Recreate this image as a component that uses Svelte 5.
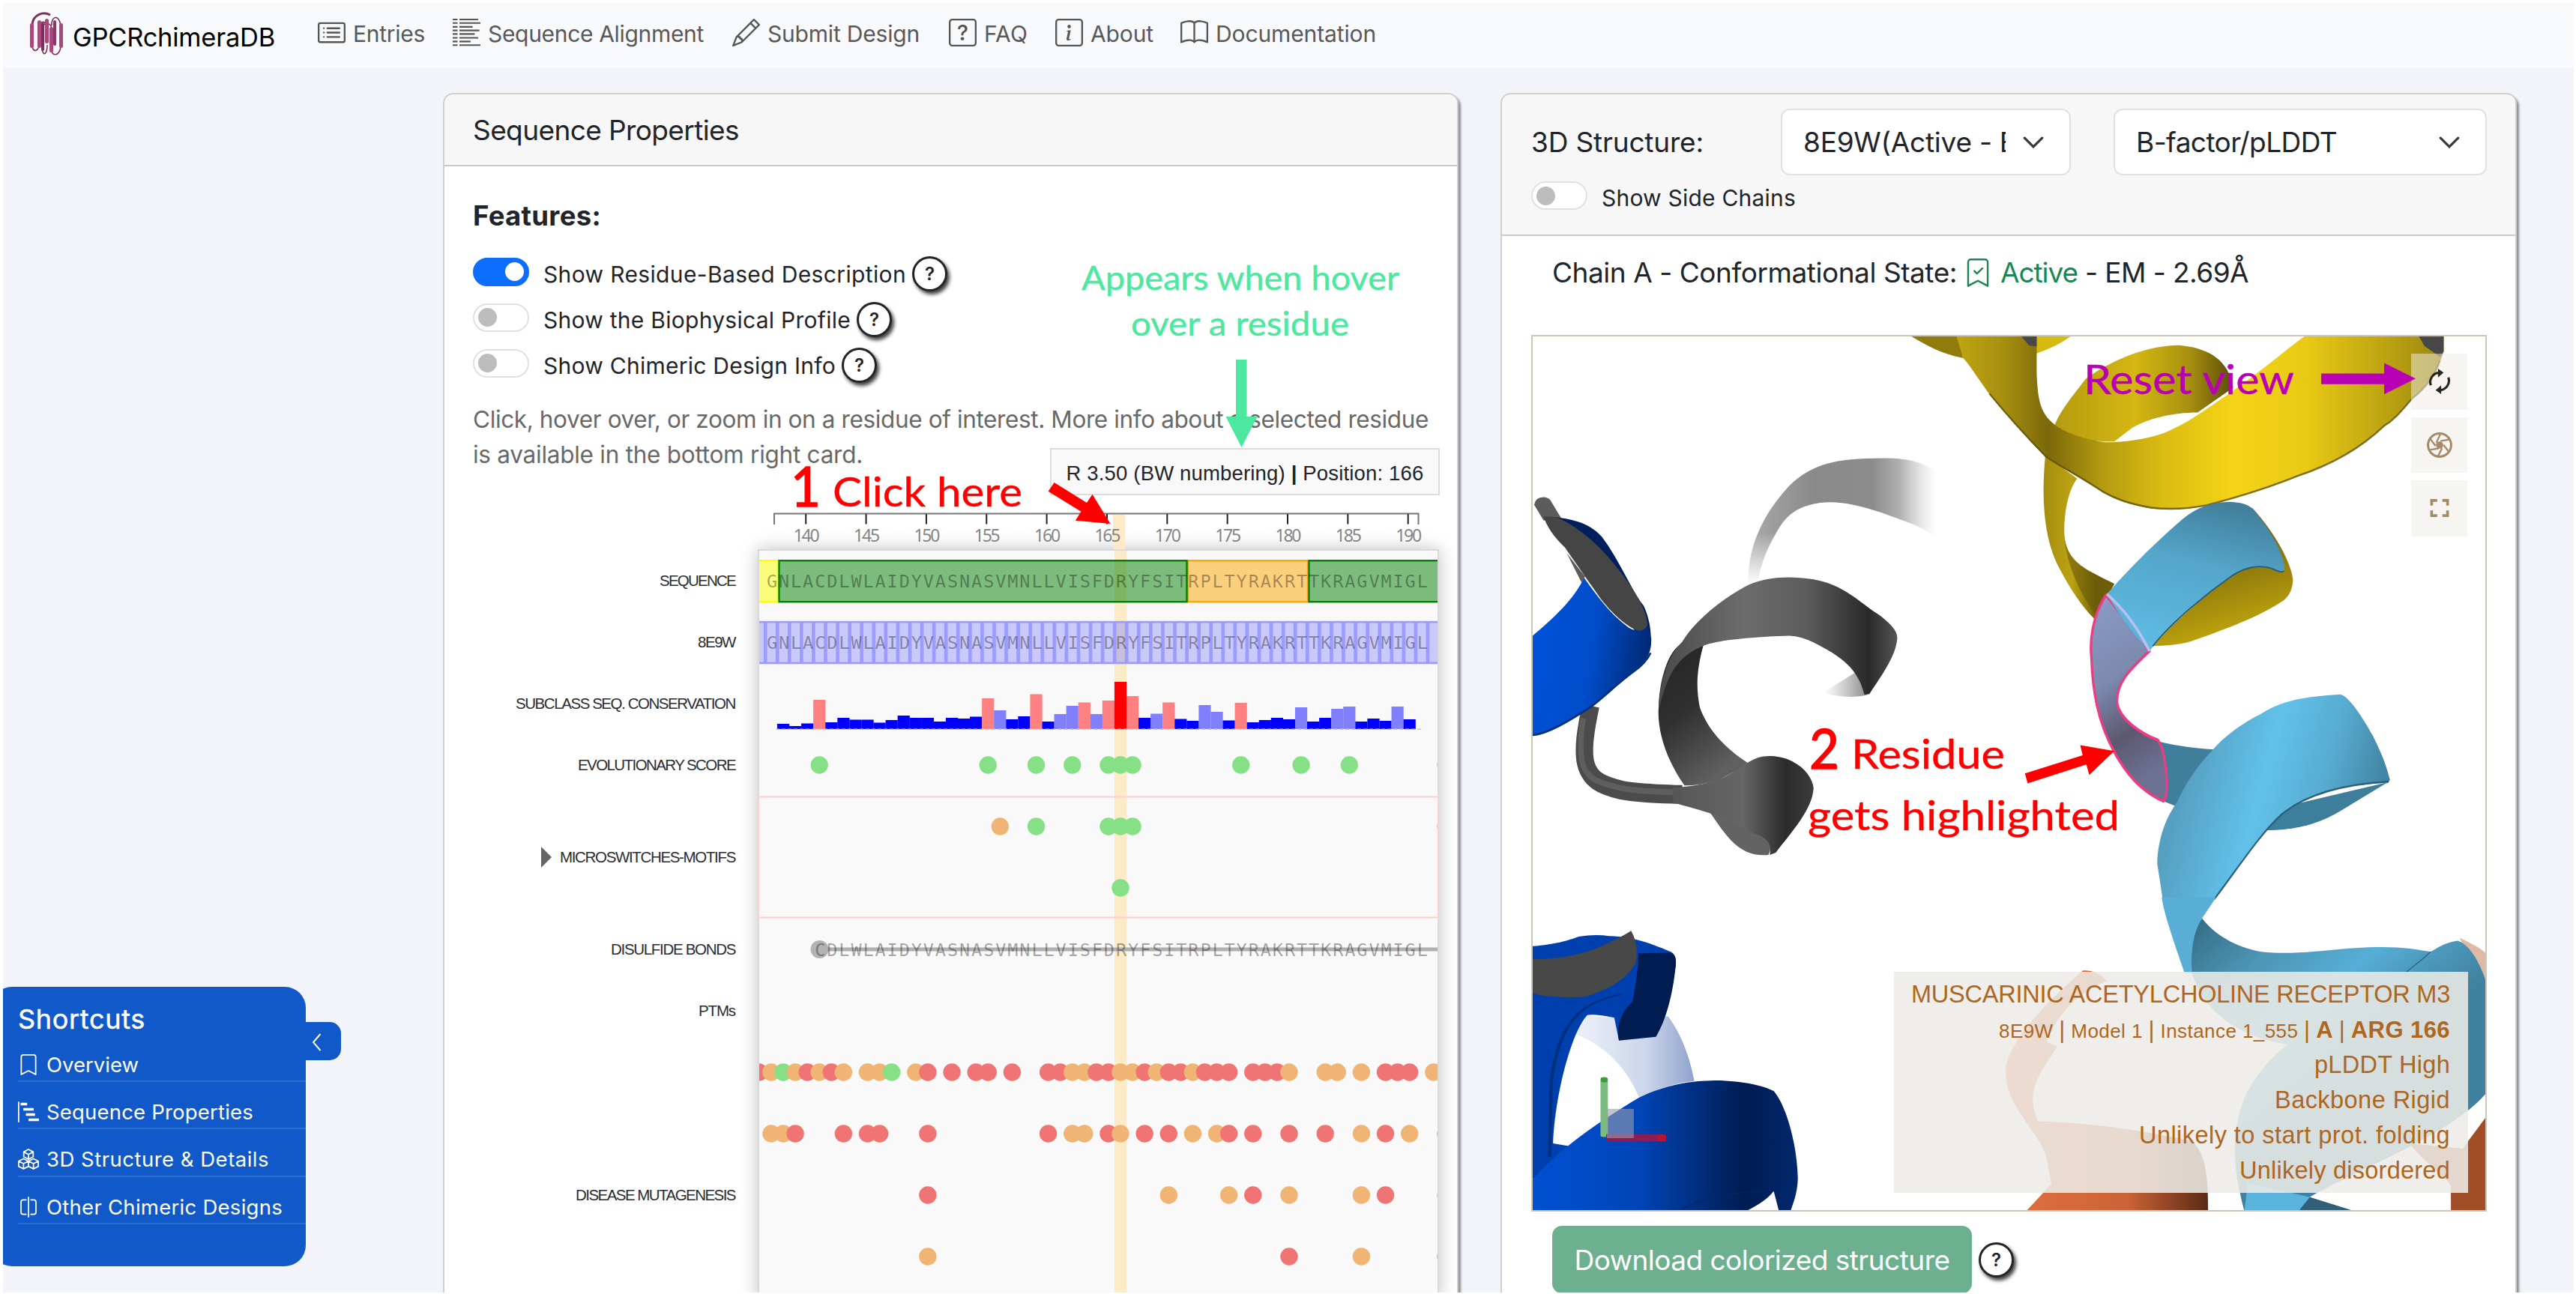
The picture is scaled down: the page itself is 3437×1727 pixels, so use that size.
<script>
  const sequence = 'GNLACDLWLAIDYVASNASVMNLLVISFDRYFSITRPLTYRAKRTTKRAGVMIGL';
  const first = 137;
  const pitch = 16.07;
  const trackX = (n) => 1495 + (n - 166) * pitch;
  const axisX = (n) => 1075.2 + (n - 140) * pitch;
  const ticks = [140, 145, 150, 155, 160, 165, 170, 175, 180, 185, 190];
  const letters = [...sequence].map((c, i) => ({ c, n: first + i }));
  const cells = Array.from({ length: 58 }, (_, i) => 136 + i);

  // conservation bar heights from residue 138; s = strong, m = medium, x = maximum
  const bars = '7 4 7.5 39s 9 15 12.5 12.5 8.5 12 18 15 15 10 15 14 16.5 41s 25m 13 17 46.5s 10 20m 31m 35.5s 20m 38s 63x 44s 15 20.5m 35.5s 13.5 11 32m 23m 11.5 35s 9 12 15 13 29m 10 15 27m 30m 10 14 11 30m 13'
    .split(' ')
    .map((v, i) => ({ n: 138 + i, h: parseFloat(v), kind: /[smx]$/.test(v) ? v.slice(-1) : 'l' }));

  const dotRows = [
    { y: 1021, d: '141g 155g 159g 162g 165g 166g 167g 176g 181g 185g 193g' },
    { y: 1103, d: '156o 159g 165g 166g 167g 193g' },
    { y: 1185, d: '166g' },
    { y: 1431, d: '136r 137o 138g 139o 140r 141o 142r 143o 145o 146o 147g 149o 150r 152r 154r 155r 157r 160r 161r 162o 163o 164r 165r 166o 167o 168r 169o 170r 171r 172o 173r 174r 175r 177r 178r 179r 180o 183o 184o 186o 188r 189r 190r 192o' },
    { y: 1513, d: '137o 138o 139r 143r 145r 146r 150r 160r 162o 163o 165r 166o 168r 170r 172o 174o 175r 177r 180r 183r 186o 188r 190o 193r' },
    { y: 1595, d: '150r 170o 175o 177r 180o 186o 188r 193o' },
    { y: 1677, d: '150o 180r 186o 193r' }
  ];
  const dots = dotRows.flatMap((r) => r.d.split(' ').map((t) => ({ y: r.y, n: parseInt(t), k: t.slice(-1) })));

  const trackLabels = [
    { t: 'SEQUENCE', w: 101, rows: 1 },
    { t: '8E9W', w: 50, rows: 1 },
    { t: 'SUBCLASS SEQ. CONSERVATION', w: 293, rows: 1 },
    { t: 'EVOLUTIONARY SCORE', w: 210, rows: 1 },
    { t: 'MICROSWITCHES-MOTIFS', w: 234, rows: 2, open: true },
    { t: 'DISULFIDE BONDS', w: 166, rows: 1 },
    { t: 'PTMs', w: 49, rows: 1 },
    { t: 'DISEASE MUTAGENESIS', w: 213, rows: 5 }
  ];

  const features = [
    { t: 'Show Residue-Based Description', w: 484, on: true },
    { t: 'Show the Biophysical Profile', w: 410, on: false },
    { t: 'Show Chimeric Design Info', w: 390, on: false }
  ];

  const square = 'M14 1a1 1 0 0 1 1 1v12a1 1 0 0 1-1 1H2a1 1 0 0 1-1-1V2a1 1 0 0 1 1-1zM2 0a2 2 0 0 0-2 2v12a2 2 0 0 0 2 2h12a2 2 0 0 0 2-2V2a2 2 0 0 0-2-2z';
  const bookmark = 'M2 2a2 2 0 0 1 2-2h8a2 2 0 0 1 2 2v13.5a.5.5 0 0 1-.777.416L8 13.101l-5.223 2.815A.5.5 0 0 1 2 15.5zm2-1a1 1 0 0 0-1 1v12.566l4.723-2.482a.5.5 0 0 1 .554 0L13 14.566V2a1 1 0 0 0-1-1z';
  const bookmarkTick = 'M10.854 5.146a.5.5 0 0 1 0 .708l-3 3a.5.5 0 0 1-.708 0l-1.5-1.5a.5.5 0 1 1 .708-.708L7.5 7.793l2.646-2.647a.5.5 0 0 1 .708 0';
  const nav = [
    { t: 'Entries', w: 96, icon: 'M14.5 3a.5.5 0 0 1 .5.5v9a.5.5 0 0 1-.5.5h-13a.5.5 0 0 1-.5-.5v-9a.5.5 0 0 1 .5-.5zm-13-1A1.5 1.5 0 0 0 0 3.5v9A1.5 1.5 0 0 0 1.5 14h13a1.5 1.5 0 0 0 1.5-1.5v-9A1.5 1.5 0 0 0 14.5 2zM5 8a.5.5 0 0 1 .5-.5h7a.5.5 0 0 1 0 1h-7A.5.5 0 0 1 5 8m0-2.5a.5.5 0 0 1 .5-.5h7a.5.5 0 0 1 0 1h-7a.5.5 0 0 1-.5-.5m0 5a.5.5 0 0 1 .5-.5h7a.5.5 0 0 1 0 1h-7a.5.5 0 0 1-.5-.5m-1-5a.5.5 0 1 1-1 0 .5.5 0 0 1 1 0M4 8a.5.5 0 1 1-1 0 .5.5 0 0 1 1 0m0 2.5a.5.5 0 1 1-1 0 .5.5 0 0 1 1 0' },
    { t: 'Sequence Alignment', w: 288, icon: 'M0 0h2.8v.9H0zM3.9 0h10.800v.9H3.900zM0 2.050h2.800v.9H0zM3.900 2.050h12.100v.9H3.900zM0 4.250h2.800v.9H0zM3.900 4.250h7.600v.9H3.900zM0 6.300h2.800v.9H0zM3.900 6.300h11.500v.9H3.900zM0 8.350h2.800v.9H0zM3.900 8.350h8.800v.9H3.900zM0 10.600h2.800v.9H0zM3.900 10.600h10.800v.9H3.900zM0 12.700h2.800v.9H0zM3.900 12.700h6.400v.9H3.900zM0 14.800h2.800v.9H0zM3.900 14.800h12.100v.9H3.900z' },
    { t: 'Submit Design', w: 203, icon: 'M12.146.146a.5.5 0 0 1 .708 0l3 3a.5.5 0 0 1 0 .708l-10 10a.5.5 0 0 1-.168.11l-5 2a.5.5 0 0 1-.65-.65l2-5a.5.5 0 0 1 .11-.168zM11.207 2.5 13.5 4.793 14.793 3.5 12.5 1.207zm1.586 3L10.5 3.207 4 9.707V10h.5a.5.5 0 0 1 .5.5v.5h.5a.5.5 0 0 1 .5.5v.5h.293zm-9.761 5.175-.106.106-1.528 3.821 3.821-1.528.106-.106A.5.5 0 0 1 5 12.5V12h-.5a.5.5 0 0 1-.5-.5V11h-.5a.5.5 0 0 1-.468-.325' },
    { t: 'FAQ', w: 58, icon: square + 'M5.255 5.786a.237.237 0 0 0 .241.247h.825c.138 0 .248-.113.266-.25.09-.656.54-1.134 1.342-1.134.686 0 1.314.343 1.314 1.168 0 .635-.374.927-.965 1.371-.673.489-1.206 1.06-1.168 1.987l.003.217a.25.25 0 0 0 .25.246h.811a.25.25 0 0 0 .25-.25v-.105c0-.718.273-.927 1.01-1.486.609-.463 1.244-.977 1.244-2.056 0-1.511-1.276-2.241-2.673-2.241-1.267 0-2.655.59-2.75 2.286m1.557 5.763c0 .533.425.927 1.01.927.609 0 1.028-.394 1.028-.927 0-.552-.42-.94-1.029-.94-.584 0-1.009.388-1.009.94' },
    { t: 'About', w: 84, icon: square + 'M8.93 6.588l-2.29.287-.082.38.45.083c.294.07.352.176.288.469l-.738 3.468c-.194.897.105 1.319.808 1.319.545 0 1.178-.252 1.465-.598l.088-.416c-.2.176-.492.246-.686.246-.275 0-.375-.193-.304-.533zM9 4.5a1 1 0 1 1-2 0 1 1 0 0 1 2 0' },
    { t: 'Documentation', w: 214, icon: 'M1 2.828c.885-.37 2.154-.769 3.388-.893 1.33-.134 2.458.063 3.112.752v9.746c-.935-.53-2.12-.603-3.213-.493-1.18.12-2.37.461-3.287.811zm7.500-.141c.654-.689 1.782-.886 3.112-.752 1.234.124 2.503.523 3.388.893v9.923c-.918-.35-2.107-.692-3.287-.81-1.094-.111-2.278-.039-3.213.492zM8 1.783C7.015.936 5.587.81 4.287.94c-1.514.153-3.042.672-3.994 1.105A.5.5 0 0 0 0 2.5v11a.5.5 0 0 0 .707.455c.882-.4 2.303-.881 3.68-1.02 1.409-.142 2.59.087 3.223.877a.5.5 0 0 0 .78 0c.633-.79 1.814-1.019 3.222-.877 1.378.139 2.8.62 3.681 1.02A.5.5 0 0 0 16 13.5v-11a.5.5 0 0 0-.293-.455c-.952-.433-2.48-.952-3.994-1.105C10.413.809 8.985.936 8 1.783' }
  ];

  // Tracks a single-line label so that it fills the given width in pixels.
  function track(node, width) {
    const natural = node.getBoundingClientRect().width;
    node.style.letterSpacing = (width - natural) / node.textContent.length + 'px';
  }
</script>

{#snippet help()}
  <span class="help">?</span>
{/snippet}

{#snippet caret()}
  <svg class="caret" viewBox="0 0 26 15"><path d="M2 2l11 11L24 2" /></svg>
{/snippet}

<div class="frame">
  <nav class="navbar">
    <a class="brand" href="#home">
      <svg class="logo" viewBox="0 0 44 58">
        <g fill="none" stroke="#7c2f58" stroke-width="1.600">
          <path d="M3 17C4 3 18-1 27 4" stroke-width="3" />
          <path d="M13 16C16 12 20 13 22 16M16 22C19 12 29 14 29 24M29 18C28 6 38 2 41 18" />
          <path d="M3 46C4 54 12 54 13 40M16 48C17 60 23 57 23 44M29 48C27 60 40 60 41 46" />
        </g>
        <g fill="#a6497c">
          <rect x="0" y="15" width="5" height="33" rx="2.500" /><rect x="10" y="11" width="5" height="37" rx="2.500" />
          <rect x="15" y="14" width="4" height="38" rx="2" fill="#7c2f58" /><rect x="20" y="9" width="5" height="33" rx="2.500" />
          <rect x="26" y="20" width="5" height="34" rx="2.500" /><rect x="31" y="11" width="4" height="34" rx="2" fill="#8b3765" />
          <rect x="39" y="15" width="5" height="33" rx="2.500" />
        </g>
      </svg>
      <span class="line" use:track={270}>GPCRchimeraDB</span>
    </a>
    <div class="links">
      {#each nav as item}
        <a class="link" href="#nav">
          <svg class="icon" viewBox="0 0 16 16"><path d={item.icon} /></svg>
          <span class="line" use:track={item.w}>{item.t}</span>
        </a>
      {/each}
    </div>
  </nav>

  <main>
    <section class="card props">
      <header><span class="line" use:track={355}>Sequence Properties</span></header>
      <div class="body">
        <h2><span class="line" use:track={171}>Features:</span></h2>
        {#each features as f}
          <div class="option">
            <span class="switch" class:on={f.on}><i></i></span>
            <span class="line" use:track={f.w}>{f.t}</span>
            {@render help()}
          </div>
        {/each}
        <p class="hint">
          <span class="line" use:track={1275}>Click, hover over, or zoom in on a residue of interest. More info about a selected residue</span>
          <span class="line" use:track={520}>is available in the bottom right card.</span>
        </p>
        <div class="viewer">
          <div class="names">
            {#each trackLabels as l}
              <div class="name" style:height="{l.rows * 82}px">
                {#if l.open}<svg class="expander" viewBox="0 0 14 28"><path d="M0 0L14 14L0 28z" /></svg>{/if}
                <span class="line" use:track={l.w}>{l.t}</span>
              </div>
            {/each}
          </div>
          <div class="plots">
            <svg class="axis" viewBox="1011 665 909 68">
              <rect x="1485" y="687" width="16" height="46" fill="#fdebc8" />
              <path d="M1033 700V685.5H1892.500V700" fill="none" stroke="#777" stroke-width="2" />
              {#each ticks as n}
                <line x1={axisX(n)} x2={axisX(n)} y1="686" y2="699.500" stroke="#222" stroke-width="2" />
                <text x={axisX(n) + 1} y="722.500" textLength="35">{n}</text>
              {/each}
            </svg>
            <div class="tracks">
              <svg viewBox="1011 733 909 1000">
                <rect x="1487" y="733" width="16.500" height="1000" fill="#fbebc6" />
                <rect x="1000" y="748.200" width="38" height="55" fill="#ffff00" fill-opacity=".5" stroke="#ffff00" stroke-width="2.400" />
                <rect x="1585" y="748.200" width="160" height="55" fill="#ffa500" fill-opacity=".5" stroke="#ffa500" stroke-width="2.400" />
                <rect x="1039.500" y="748.200" width="544" height="55" fill="#008000" fill-opacity=".5" stroke="#008000" stroke-width="2.400" />
                <rect x="1746.500" y="748.200" width="200" height="55" fill="#008000" fill-opacity=".5" stroke="#008000" stroke-width="2.400" />
                <rect x="1011" y="828.800" width="909" height="57.500" fill="#9c9cff" />
                {#each cells as n}
                  <rect x={trackX(n) - 5.500} y="831.500" width="11.400" height="52" fill={n === 166 ? '#c7bfdc' : '#c9c9fb'} />
                {/each}
                <g class="residues">
                  {#each letters as l}
                    <text x={trackX(l.n) + 1} y="784">{l.c}</text>
                    <text x={trackX(l.n) + 1} y="866">{l.c}</text>
                  {/each}
                </g>
                {#each bars as b}
                  <rect class="bar {b.kind}" x={trackX(b.n) - 8.100} y={973 - b.h} width="16.200" height={b.h} />
                {/each}
                <line x1="1035" x2="1896" y1="973.200" y2="973.200" stroke="#c8c8c8" stroke-width="1.600" stroke-dasharray="5 3" />
                <line x1="1093" x2="1920" y1="1267" y2="1267" stroke="#b0b0b0" stroke-width="5" />
                <circle cx="1093.500" cy="1267" r="12" fill="#b3b3b3" />
                <g class="residues bonds">
                  {#each letters.slice(4) as l}<text x={trackX(l.n) + 1} y="1275.500">{l.c}</text>{/each}
                </g>
                {#each dots as d}
                  <circle class="dot {d.k}" cx={trackX(d.n)} cy={d.y} r="11.700" />
                {/each}
                <path d="M1012 1740V734H1919V1740" fill="none" stroke="#dadada" stroke-width="2" />
                <rect x="1012" y="1063.500" width="907" height="161" fill="none" stroke="#fbd0cd" stroke-width="2" />
              </svg>
            </div>
          </div>
        </div>
        <div class="tip"><span class="line" use:track={477}>R 3.50 (BW numbering) <b>|</b> Position: 166</span></div>
      </div>
    </section>

    <section class="card structure">
      <header>
        <div class="controls">
          <span class="line title" use:track={230}>3D Structure:</span>
          <div class="select small"><span class="clip"><span class="line" use:track={317}>8E9W(Active - EM</span></span>{@render caret()}</div>
          <div class="select large"><span class="line" use:track={268}>B-factor/pLDDT</span>{@render caret()}</div>
        </div>
        <div class="side">
          <span class="switch"><i></i></span>
          <span class="line" use:track={259}>Show Side Chains</span>
        </div>
      </header>
      <div class="body">
        <div class="state">
          <span class="line" use:track={540}>Chain A - Conformational State:</span>
          <svg class="mark" viewBox="0 0 16 16"><path d={bookmark} /><path d={bookmarkTick} /></svg>
          <span class="line active" use:track={103}>Active</span>
          <span class="line" use:track={218}>- EM - 2.69Å</span>
        </div>
        <div class="canvas">
          <svg class="scene" viewBox="2045 449 1271 1166">
            <defs>
              <linearGradient id="fade"><stop offset="0" stop-color="#aaa" /><stop offset=".35" stop-color="#8a8a8a" /><stop offset=".66" stop-color="#8c8c8c" /><stop offset=".8" stop-color="#949494" stop-opacity=".75" /><stop offset=".93" stop-color="#a0a0a0" stop-opacity=".22" /><stop offset="1" stop-color="#aaa" stop-opacity="0" /></linearGradient>
              <linearGradient id="fadeDown" x2="0" y2="1"><stop offset="0" stop-color="#fff" stop-opacity="0" /><stop offset="1" stop-color="#fff" /></linearGradient>
              <linearGradient id="wisp"><stop offset="0" stop-color="#aaa" stop-opacity="0" /><stop offset="1" stop-color="#888" /></linearGradient>
              <linearGradient id="gray"><stop offset="0" stop-color="#4a4a4a" /><stop offset=".35" stop-color="#6c6c6c" /><stop offset=".62" stop-color="#5c5c5c" /><stop offset=".88" stop-color="#292929" /><stop offset="1" stop-color="#555" /></linearGradient>
              <linearGradient id="grayIn" x2=".5" y2="1"><stop offset="0" stop-color="#232323" /><stop offset=".5" stop-color="#303030" /><stop offset="1" stop-color="#606060" /></linearGradient>
              <linearGradient id="fan"><stop offset="0" stop-color="#565656" /><stop offset=".5" stop-color="#666" /><stop offset=".8" stop-color="#2b2b2b" /><stop offset="1" stop-color="#3c3c3c" /></linearGradient>
              <linearGradient id="blue" x1="0" y1=".4" x2="1" y2=".6"><stop offset="0" stop-color="#0052da" /><stop offset=".5" stop-color="#004cc8" /><stop offset="1" stop-color="#00266c" /></linearGradient>
              <linearGradient id="blueLow"><stop offset="0" stop-color="#0050d2" /><stop offset=".4" stop-color="#0045b8" /><stop offset=".8" stop-color="#001c50" /><stop offset="1" stop-color="#00286e" /></linearGradient>
              <linearGradient id="ghost"><stop offset="0" stop-color="#eef1f9" /><stop offset=".6" stop-color="#ccd6ea" /><stop offset="1" stop-color="#8ea2cc" /></linearGradient>
              <linearGradient id="gold" gradientUnits="userSpaceOnUse" x1="-220" y1="60" x2="1352" y2="60"><stop offset="0" stop-color="#c0a511" /><stop offset=".1" stop-color="#a58f10" /><stop offset=".19" stop-color="#7b680a" /><stop offset=".3" stop-color="#b49a10" /><stop offset=".42" stop-color="#d9bb13" /><stop offset=".57" stop-color="#f4d416" /><stop offset=".72" stop-color="#e8c915" /><stop offset="1" stop-color="#9c870f" /></linearGradient>
              <linearGradient id="goldBack"><stop offset="0" stop-color="#b59b10" /><stop offset=".45" stop-color="#d4b712" /><stop offset=".75" stop-color="#a8910f" /><stop offset="1" stop-color="#5c4d07" /></linearGradient>
              <linearGradient id="goldLow" x2=".3" y2="1"><stop offset="0" stop-color="#7a690b" /><stop offset=".4" stop-color="#7b690b" /><stop offset="1" stop-color="#bfa30e" /></linearGradient>
              <linearGradient id="goldSide"><stop offset="0" stop-color="#a38d0f" /><stop offset=".4" stop-color="#bca212" /><stop offset=".75" stop-color="#756309" /><stop offset="1" stop-color="#7d6a0a" /></linearGradient>
              <linearGradient id="cyan" x1=".6" y1="0" x2=".3" y2="1"><stop offset="0" stop-color="#427f9d" /><stop offset=".4" stop-color="#54a6ca" /><stop offset="1" stop-color="#5fbbe4" /></linearGradient>
              <linearGradient id="cyanBig" x1=".15" y1=".2" x2="1" y2=".4"><stop offset="0" stop-color="#559fc0" /><stop offset=".4" stop-color="#62c1ea" /><stop offset=".7" stop-color="#57abd0" /><stop offset="1" stop-color="#3f819f" /></linearGradient>
              <linearGradient id="cyanLow" gradientUnits="userSpaceOnUse" x1="996" y1="150" x2="1434" y2="350"><stop offset="0" stop-color="#356d86" /><stop offset=".3" stop-color="#4c94b4" /><stop offset=".6" stop-color="#57aed6" /><stop offset="1" stop-color="#3f819f" /></linearGradient>
              <linearGradient id="pick" x2=".25" y2="1"><stop offset="0" stop-color="#8c9cc8" /><stop offset=".45" stop-color="#7c8aae" /><stop offset=".75" stop-color="#5d5870" /><stop offset="1" stop-color="#6c7192" /></linearGradient>
              <linearGradient id="rust"><stop offset="0" stop-color="#e07040" /><stop offset=".6" stop-color="#cc6336" /><stop offset="1" stop-color="#5a2a15" /></linearGradient>
            </defs>

            <!-- left half: grey coil and blue strand -->
            <g transform="translate(2030 440) scale(.44643 .4847)">
              <path fill="url(#fade)" d="M678 700C675 600 720 510 800 430C880 360 960 354 1100 354C1180 356 1210 375 1240 390V575C1200 540 1150 530 1080 505C1000 480 940 470 890 477C800 490 780 530 755 570C730 610 715 650 705 700Z" />
              <rect x="660" y="560" width="110" height="142" fill="url(#fadeDown)" />
              <path fill="#5c5c5c" d="M38 482Q42 460 68 461Q85 462 92 478L122 524L66 525ZM135 615L190 680L180 697Z" />
              <path fill="none" stroke="#4b4b4b" stroke-width="52" d="M207 1035C190 1110 185 1150 190 1185C200 1240 240 1255 300 1268C360 1278 420 1278 480 1280" />
              <path fill="none" stroke="#5e5e5e" stroke-width="16" d="M185 1070C175 1120 177 1150 180 1185C190 1240 240 1250 300 1263C360 1273 420 1273 480 1274" />
              <path fill="#001f5c" d="M90 515C150 522 200 530 240 570C290 630 330 720 365 760C385 800 390 840 385 880L340 830Z" />
              <path fill="#454545" d="M66 515Q90 512 115 520C180 550 240 600 290 660C340 720 380 780 376 815Q372 835 345 828C300 810 250 760 225 725C190 680 160 640 130 600C95 570 75 540 66 515Z" />
              <path fill="url(#blue)" d="M33 843C90 800 160 740 187 683C220 725 260 780 320 820Q360 840 376 815L388 850C388 900 370 910 340 940C280 980 240 1020 200 1045C140 1080 80 1115 33 1119Z" />
              <path fill="none" stroke="#00307e" stroke-width="6" d="M386 890C375 910 360 925 340 938C280 978 240 1018 200 1043C140 1078 80 1112 33 1116" />
              <path fill="url(#wisp)" d="M900 1000Q980 1018 1034 1006L1005 940Z" />
              <path fill="url(#grayIn)" d="M545 865C525 930 520 980 533 1040C560 1110 620 1160 680 1195L590 1240C560 1250 520 1255 487 1255C430 1180 405 1100 410 1040C412 960 440 890 470 870Z" />
              <path fill="url(#gray)" d="M411 1045C412 960 445 890 480 860C520 800 600 740 680 702C740 680 800 678 870 687C960 700 1010 750 1060 780C1100 805 1125 830 1123 850C1120 900 1070 960 1040 1003L1025 1005C1010 950 980 920 930 890C890 870 850 845 800 843C700 845 600 855 560 865C480 890 440 930 411 1045Z" />
              <path fill="#636363" d="M560 1325C600 1335 680 1375 735 1405Q752 1425 738 1446C700 1450 660 1440 625 1405C600 1380 580 1350 560 1325Z" />
              <path fill="url(#fan)" d="M452 1262C520 1255 580 1250 630 1220C680 1190 700 1172 750 1174C830 1180 870 1230 873 1262C870 1320 810 1380 760 1440L742 1446C750 1410 730 1400 690 1385C600 1335 520 1320 452 1302Z" />
            </g>

            <!-- upper right: gold helix, cyan turn and selected residue -->
            <g transform="translate(2700 440) scale(.41454 .4847)">
              <path fill="#8f7c0d" d="M-362 18C-310 45 -260 68 -195 78L-210 18Z" />
              <path fill="#d6b911" d="M40 18H152Q110 45 40 66Z" />
              <path fill="url(#goldBack)" d="M100 262C120 220 160 180 200 135C290 80 400 44 500 43C590 50 660 80 674 160L560 228C480 228 400 245 350 270L292 308C200 310 140 290 100 262Z" />
              <path fill="url(#goldSide)" d="M70 345C58 450 62 560 105 640C140 700 180 755 228 797L292 700C200 660 135 640 131 560C130 500 145 440 172 410Z" />
              <path fill="#65560a" d="M131 560C133 620 160 700 235 790L292 700C200 660 135 640 131 560Z" opacity=".55" />
              <path fill="url(#gold)" d="M-216 18H42V120C45 180 50 220 85 250C120 280 170 295 260 310C330 310 400 300 450 285C520 260 560 235 620 200C760 120 850 50 905 18H1352V60C1335 110 1300 155 1250 190C1210 230 1190 250 1160 265C1080 330 980 375 880 405C780 440 680 465 590 485C520 497 460 497 410 492C330 480 290 465 255 448C180 405 110 375 70 350C-20 270 -60 230 -110 178C-150 130 -180 90 -195 78Z" />
              <path fill="none" stroke="#5f5108" stroke-opacity=".8" stroke-width="5" d="M1340 85C1325 125 1295 160 1250 190C1210 230 1190 250 1160 265C1080 330 980 375 880 403C780 438 680 463 590 483C520 495 460 495 410 490C330 478 290 463 255 446C180 403 110 373 70 348C-20 268 -60 228 -110 176" />
              <path fill="#484848" d="M1272 18H1352V60L1340 75L1290 45ZM-8 18H42V46L18 44Z" />
              <path fill="url(#goldLow)" d="M735 490C790 540 860 630 867 690Q865 725 838 745C760 790 650 825 540 858C500 868 450 872 405 870L600 720Z" />
              <path fill="url(#cyan)" d="M268 728C360 640 420 590 500 530C560 485 610 475 665 474C700 476 725 480 745 500C800 560 840 620 840 662Q830 672 800 658C760 645 710 655 670 678C600 720 480 800 405 885C360 830 320 770 268 728Z" />
              <path fill="none" stroke="#2c5c73" stroke-width="4" d="M838 664C830 672 810 662 800 658C760 645 710 655 670 678C600 720 480 800 415 872" />
              <path fill="#3f7f9c" d="M436 1134C500 1148 560 1152 615 1156L490 1312L450 1298Z" />
              <path fill="url(#pick)" stroke="#ec3d84" stroke-width="8" stroke-linejoin="round" d="M265 730C220 790 213 860 218 900C222 1000 240 1080 290 1160C340 1240 400 1280 450 1298Q462 1290 461 1240C455 1180 450 1150 432 1130C370 1110 310 1070 301 1030C295 970 350 930 405 885Z" />
              <path fill="#5ab4dc" d="M268 728Q350 790 405 885Q330 820 268 728Z" />
              <path fill="none" stroke="#b9c0ee" stroke-width="8" d="M268 728Q350 790 405 885" />
              <path fill="#3d7e9c" d="M765 1378C880 1380 950 1360 1020 1325L1172 1246L830 1315Z" />
              <path fill="url(#cyanBig)" d="M610 1156C640 1125 700 1085 760 1060C840 1015 920 1010 1020 1004C1050 1010 1100 1080 1125 1120C1160 1180 1170 1210 1179 1240L1172 1248C1060 1250 920 1270 830 1335C760 1390 700 1470 612 1570H448L430 1470C432 1400 460 1340 495 1300C520 1250 560 1200 610 1156Z" />
              <path fill="none" stroke="#2c6079" stroke-width="5" d="M1175 1244C1060 1250 920 1270 830 1335C760 1390 700 1470 614 1568" />
            </g>

            <!-- lower band: blue strand, rust loop, cyan tail -->
            <g transform="translate(2030 1180) scale(.8973 .3495)">
              <path fill="#c98a6c" opacity=".6" d="M1395 205Q1425 240 1434 265V370L1405 260Z" />
              <path fill="url(#rust)" d="M835 330C790 430 720 600 720 720C720 860 780 960 783 1080L788 1145L750 1250H1021C1021 1150 1020 1020 995 980C900 930 850 915 768 905C750 800 765 740 797 620L780 600C800 500 820 420 870 370Q855 325 835 330Z" />
              <path fill="#a04d28" d="M1434 890L1408 980L1400 1010L1320 990C1350 1080 1375 1120 1382 1150V1250H1434Z" />
              <path fill="url(#cyanLow)" d="M1012 130C1030 190 1060 240 1100 258C1160 275 1210 240 1280 240C1310 240 1335 250 1352 258Q1375 220 1392 216C1410 230 1425 300 1434 370V800C1380 960 1250 1080 1172 1195L1240 1250H1075C1060 1100 1050 950 1080 790C1100 700 1120 650 1140 612C1050 580 1010 450 996 334C994 250 1000 170 1012 130Z" />
              <path fill="#58aed4" d="M952 50L1033 50C1020 100 1015 120 1012 130C1000 170 995 250 996 340H986C970 220 955 110 952 50Z" />
              <path fill="none" stroke="#2c6079" stroke-width="2" d="M1352 258C1335 300 1322 320 1312 345" />
              <path fill="#2f6078" d="M1172 1195L1240 1250H1155Z" />
              <path fill="#5ab4dc" d="M1080 1140L1172 1195L1155 1250H1075Z" />

              <path fill="url(#ghost)" d="M80 500L138 510L218 505C240 580 252 680 257 752C220 760 190 800 175 815C160 720 130 620 78 570Z" />
              <path fill="#003fae" d="M16 237C50 230 70 215 85 200Q110 190 130 198C170 200 200 235 222 258Q232 270 229 320L170 560L145 597L138 510Q110 495 98 500C75 560 50 800 47 990L70 1000L16 1130Z" />
              <path fill="#001c50" d="M174 265L222 262Q232 270 229 320C225 420 215 520 200 583L145 597C140 540 150 480 165 450Q174 330 174 265Z" />
              <path fill="none" stroke="#00307e" stroke-width="5" d="M150 420C90 450 55 520 44 760L42 1040" />
              <path fill="#484848" d="M16 287C60 285 90 270 120 235Q150 200 163 178Q175 230 170 300C155 370 130 400 95 430C60 435 30 430 16 415Z" />
              <path fill="url(#blueLow)" d="M16 1130C60 1000 120 900 175 815C220 760 260 748 300 750C340 755 365 775 375 790C395 850 410 1000 411 1125C410 1190 402 1230 400 1250H16Z" />
              <path fill="#fff" d="M333 1250Q365 1210 375 1172L383 1250Z" />
              <path fill="none" stroke="#00266c" stroke-width="3" d="M232 1250C270 1195 310 1175 375 1172" />
              <g stroke-linecap="round" fill="none">
                <path stroke="#7dbb80" stroke-width="11" d="M123 745V960" /><path stroke="#3d9a41" stroke-width="10" d="M123 742V752" />
              </g>
              <rect x="126" y="955" width="80" height="28" fill="#8c1c56" /><rect x="203" y="955" width="12" height="28" rx="5" fill="#b81438" />
              <rect x="127" y="858" width="40" height="112" fill="#9a9cae" opacity=".6" />
            </g>
          </svg>
          <div class="tools">
            <span class="tool"><svg viewBox="0 0 32 32"><g fill="none" stroke="#2c261e" stroke-width="3"><path d="M5 21A12 12 0 0 1 15 5M27 11A12 12 0 0 1 17 27" /></g><path fill="#2c261e" d="M14 0L21 5L14 11ZM18 21L11 27L18 32Z" /></svg></span>
            <span class="tool"><svg viewBox="0 0 32 32"><circle cx="16" cy="16" r="14.500" fill="none" stroke="#a48a66" stroke-width="2.800" /><circle cx="16" cy="16" r="4.500" fill="#a48a66" /><path fill="none" stroke="#a48a66" stroke-width="2.200" d="M12 13L17 2M17 11L28 9M21 16L28 25M19 20L14 30M15 20L4 22M11 17L4 8" /></svg></span>
            <span class="tool"><svg viewBox="0 0 32 32"><path fill="none" stroke="#a48a66" stroke-width="3.400" d="M6 13V6.500H13M19.500 6.500H26V13M26 19V25.500H19.500M13 25.500H6V19" /></svg></span>
          </div>
          <div class="info">
            <div><span class="line" use:track={719}>MUSCARINIC ACETYLCHOLINE RECEPTOR M3</span></div>
            <div class="path"><span class="line" use:track={602}>8E9W <i>|</i> Model 1 <i>|</i> Instance 1_555 <i>|</i> <b>A</b> <i>|</i> <b>ARG 166</b></span></div>
            <div><span class="line" use:track={181}>pLDDT High</span></div>
            <div><span class="line" use:track={234}>Backbone Rigid</span></div>
            <div><span class="line" use:track={415}>Unlikely to start prot. folding</span></div>
            <div><span class="line" use:track={281}>Unlikely disordered</span></div>
          </div>
        </div>
        <div class="actions">
          <button><span class="line" use:track={501}>Download colorized structure</span></button>
          {@render help()}
        </div>
      </div>
    </section>
  </main>

  <aside class="shortcuts">
    <h3><span class="line" use:track={170}>Shortcuts</span></h3>
    <a href="#overview"><svg viewBox="0 0 16 16"><path d={bookmark} /></svg><span class="line" use:track={123}>Overview</span></a>
    <a href="#sequence"><svg viewBox="0 0 16 16"><path d="M.5 0a.5.5 0 0 1 .5.5v15a.5.5 0 0 1-1 0V.5A.5.5 0 0 1 .5 0M2 1.500a.5.5 0 0 1 .5-.5h4a.5.5 0 0 1 .5.5v1a.5.5 0 0 1-.5.5h-4a.5.5 0 0 1-.5-.5zm2 4a.5.5 0 0 1 .5-.5h7a.5.5 0 0 1 .5.5v1a.5.5 0 0 1-.5.5h-7a.5.5 0 0 1-.5-.5zm2 4a.5.5 0 0 1 .5-.5h6a.5.5 0 0 1 .5.5v1a.5.5 0 0 1-.5.5h-6a.5.5 0 0 1-.5-.5zm2 4a.5.5 0 0 1 .5-.5h7a.5.5 0 0 1 .5.5v1a.5.5 0 0 1-.5.5h-7a.5.5 0 0 1-.5-.5z" /></svg><span class="line" use:track={276}>Sequence Properties</span></a>
    <a href="#structure"><svg viewBox="0 0 16 16"><path class="stroke" d="M8 .6L11.600 2.500V6.200L8 8.200L4.400 6.200V2.500ZM4.400 2.500L8 4.400L11.600 2.500M8 4.400V8M4.200 7.700L8 9.600V13.500L4.200 15.400L.5 13.500V9.600ZM.5 9.600L4.200 11.500L8 9.600M4.200 11.500V15.300M11.800 7.700L15.500 9.600V13.500L11.800 15.400L8 13.500V9.600ZM8 9.600L11.800 11.500L15.500 9.600M11.800 11.500V15.300" /></svg><span class="line" use:track={297}>3D Structure &amp; Details</span></a>
    <a href="#designs"><svg viewBox="0 0 16 16"><path class="stroke" d="M8 .2V15.800M6.500 2.500H4A1.700 1.700 0 0 0 2.300 4.200V11.800A1.700 1.700 0 0 0 4 13.500H6.500M9.500 2.500H12A1.700 1.700 0 0 1 13.700 4.200V11.800A1.700 1.700 0 0 1 12 13.500H9.500" /></svg><span class="line" use:track={315}>Other Chimeric Designs</span></a>
    <span class="tab"><svg viewBox="0 0 12 24"><path d="M11 1L1.500 12L11 23" /></svg></span>
  </aside>

  <svg class="notes" viewBox="4 4 3430 1721">
    <g fill="#4de8a0" stroke="#4de8a0">
      <text x="1443" y="387" font-size="45" textLength="424" lengthAdjust="spacingAndGlyphs">Appears when hover</text>
      <text x="1509" y="448" font-size="45" textLength="291" lengthAdjust="spacingAndGlyphs">over a residue</text>
      <path stroke="none" d="M1649 480H1663.500V556H1677.500L1656.500 597L1635.500 556H1649Z" />
    </g>
    <g fill="#ff0000" stroke="#ff0000">
      <text class="num" x="1055" y="676" font-size="74" textLength="40" lengthAdjust="spacingAndGlyphs">1</text>
      <text x="1111" y="676" font-size="55" textLength="253" lengthAdjust="spacingAndGlyphs">Click here</text>
      <path stroke="none" d="M1406.600 644L1398.600 655.700L1442.400 682.700L1434.800 694.700L1481.500 699L1457.500 659.700L1450 671Z" />
      <text class="num" x="2414" y="1025.500" font-size="74" textLength="40" lengthAdjust="spacingAndGlyphs">2</text>
      <text x="2470" y="1025.500" font-size="55" textLength="205" lengthAdjust="spacingAndGlyphs">Residue</text>
      <text x="2412" y="1107.500" font-size="55" textLength="416" lengthAdjust="spacingAndGlyphs">gets highlighted</text>
      <path stroke="none" d="M2701.700 1032.300L2705.400 1045.400L2783.700 1020.200L2787.500 1034.300L2821 1002.300L2775.500 994.500L2778.800 1008Z" />
    </g>
    <g fill="#b800b4" stroke="#b800b4">
      <text x="2780" y="526" font-size="55" textLength="281" lengthAdjust="spacingAndGlyphs">Reset view</text>
      <path stroke="none" d="M3097 498.600H3181V484.600L3223 505.300L3181 526.300V512.700H3097Z" />
    </g>
  </svg>
</div>

<style>
  :global(body) { background: #fff; }
  .frame {
    position: relative; box-sizing: border-box; width: 3430px; height: 1721px; margin: 4px 3px 0 4px; overflow: hidden;
    background: #f3f4fa; color: #212529; font-family: Inter, "Liberation Sans", sans-serif; font-size: 30px;
  }
  .line { display: inline-block; white-space: pre; flex: none; }
  a { color: inherit; text-decoration: none; }

  .navbar { display: flex; height: 87px; background: #f8f9fb; align-items: center; box-sizing: border-box; padding-left: 36px; }
  .brand { display: flex; align-items: center; width: 384px; color: #000; font-size: 34.500px; }
  .brand .line { padding-top: 4px; margin-left: 13px; }
  .logo { width: 44px; height: 58px; margin-top: -6px; }
  .links { display: grid; grid-template-columns: 180px 373px 289px 142px 167px 270px; color: #58595b; padding-bottom: 6px; }
  .link { display: flex; align-items: center; gap: 10px; }
  .icon { width: 37px; height: 37px; fill: #555; margin-top: -3px; }

  main { display: flex; gap: 56px; padding: 33px 0 0 587px; }
  .card { box-sizing: border-box; height: 1700px; background: #fff; border: 2px solid #cfcfcf; border-radius: 14px 14px 0 0; box-shadow: 3px 4px 3px rgba(0, 0, 0, .42); flex: none; }
  .card header { background: #f7f7f7; border-bottom: 2px solid #c9c9c9; border-radius: 12px 12px 0 0; box-sizing: border-box; }
  .props { width: 1355px; }
  .props header { height: 96px; padding: 0 0 0 38px; display: flex; align-items: center; font-size: 37px; }
  .props .body { position: relative; padding: 41px 0 0 38px; }
  h2 { margin: 0 0 22px; height: 50px; line-height: 50px; font-size: 36.500px; font-weight: 700; }
  .option { display: flex; align-items: center; height: 61px; }
  .switch { display: flex; align-items: center; box-sizing: border-box; width: 75px; height: 38px; margin: 0 19px 6px 0; padding: 0 5px; border: 2px solid #dee2e6; border-radius: 19px; background: #fff; flex: none; }
  .switch i { width: 25px; height: 25px; border-radius: 50%; background: #bdbdbd; }
  .switch.on { background: #0d6efd; border-color: #0d6efd; justify-content: flex-end; }
  .switch.on i { background: #fff; }
  .help { display: flex; align-items: center; justify-content: center; box-sizing: border-box; width: 47px; height: 47px; margin-left: 8px; border: 3px solid #212529; border-radius: 50%; background: #fff; color: #212529; font-size: 24px; font-weight: 600; box-shadow: 3px 4px 5px rgba(0, 0, 0, .75); flex: none; }
  .hint { margin: 18px 0 0; height: 94px; line-height: 47px; font-size: 31.500px; color: #696969; }
  .hint .line { display: block; width: max-content; }
  .viewer { display: flex; justify-content: space-between; width: 1289px; height: 1100px; margin-top: 35px; }
  .names { width: 350px; padding-top: 69px; }
  .name { display: flex; align-items: center; justify-content: flex-end; font-family: "Liberation Sans", sans-serif; font-size: 20.500px; color: #2a2d31; }
  .expander { width: 14px; height: 28px; margin-right: 11px; fill: #666; }
  .plots { width: 909px; }
  .axis { display: block; width: 909px; height: 68px; overflow: visible; }
  .axis text { font: 23px "Noto Sans", sans-serif; fill: #858585; text-anchor: middle; }
  .tracks { height: 1000px; background: #f9f9f9; box-shadow: 0 0 22px rgba(0, 0, 0, .25); }
  .tracks svg { display: block; width: 909px; height: 1000px; }
  .residues text { font: 23.500px "DejaVu Sans Mono", monospace; fill: #000; fill-opacity: .34; text-anchor: middle; }
  .bar.l { fill: #0000ff; }
  .bar.m { fill: #8080ff; }
  .bar.s { fill: #ff8080; }
  .bar.x { fill: #ff0000; }
  .dot.g { fill: #86e086; }
  .dot.o { fill: #f0b474; }
  .dot.r { fill: #f07474; }
  .tip { position: absolute; top: 376px; left: 808px; box-sizing: border-box; width: 520px; height: 63px; padding-top: 4px; display: flex; align-items: center; justify-content: center; background: #f9f9f9; border: 2px solid #dcdcdc; font-family: "Liberation Sans", sans-serif; font-size: 27.500px; }

  .structure { width: 1356px; }
  .structure header { height: 189px; padding: 19px 0 0 39px; }
  .controls { display: flex; align-items: center; height: 89px; font-size: 37px; }
  .title { margin-right: 103px; }
  .select { display: flex; align-items: center; justify-content: space-between; box-sizing: border-box; height: 89px; padding: 0 34px 0 28px; background: #fff; border: 2px solid #dee2e6; border-radius: 12px; }
  .select.small { width: 387px; margin-right: 57px; }
  .select.large { width: 498px; }
  .clip { width: 270px; overflow: hidden; flex: none; }
  .caret { width: 28px; height: 16px; fill: none; stroke: #343a40; stroke-width: 3; stroke-linecap: round; }
  .side { display: flex; align-items: center; height: 61px; margin-top: -1px; }
  .side .switch { margin-bottom: 5px; }
  .structure .body { padding: 20px 0 0 39px; }
  .state { display: flex; align-items: center; height: 56px; padding-left: 28px; font-size: 37px; }
  .mark { width: 38px; height: 38px; margin: 2px 11px 0 9px; fill: #198754; flex: none; }
  .active { color: #198754; margin-right: 10px; }
  .canvas { position: relative; box-sizing: border-box; width: 1275px; height: 1170px; margin-top: 56px; border: 2px solid #cdc6b8; }
  .scene { display: block; width: 1271px; height: 1166px; }
  .tools { position: absolute; top: 23px; right: 24px; display: flex; flex-direction: column; gap: 10px; }
  .tool { display: flex; align-items: center; justify-content: center; width: 75px; height: 74.500px; background: rgba(238, 236, 231, .52); }
  .tool svg { width: 34px; height: 34px; }
  .info { position: absolute; right: 23px; bottom: 23px; box-sizing: border-box; width: 766px; height: 295px; padding: 7px 24px 0 0; background: rgba(237, 236, 231, .87); color: #ae6620; font-family: "Liberation Sans", sans-serif; font-size: 32.500px; text-align: right; }
  .info div { display: flex; align-items: center; justify-content: flex-end; height: 47px; }
  .info .path { font-size: 26px; }
  .info .path i, .info .path b { font-size: 31px; font-style: normal; }
  .actions { display: flex; align-items: center; height: 90px; margin: 19px 0 0 28px; }
  button { box-sizing: border-box; width: 560px; height: 90px; border: 0; border-radius: 13px; background: #6cb090; color: #fff; font-family: inherit; font-size: 37px; padding: 0; }
  .actions .help { margin-left: 9px; }

  .shortcuts { position: absolute; left: -16px; top: 1313px; box-sizing: border-box; width: 420px; height: 373px; padding: 18px 0 0 36px; background: #1159c8; border-radius: 28px; color: #fff; font-size: 27.500px; }
  .shortcuts h3 { margin: 0 0 5px; height: 50px; line-height: 50px; font-size: 36px; font-weight: 400; -webkit-text-stroke: .5px #fff; }
  .shortcuts a { display: flex; align-items: center; gap: 10px; box-sizing: border-box; height: 63.300px; padding-top: 19px; border-bottom: 2px solid rgba(255, 255, 255, .12); }
  .shortcuts a:first-of-type { height: 54px; padding-top: 10px; }
  .shortcuts a svg { width: 28px; height: 28px; fill: #fff; }
  .shortcuts .stroke { fill: none; stroke: #fff; stroke-width: 1; }
  .tab { position: absolute; left: 419px; top: 47px; width: 48px; height: 51px; border-radius: 0 15px 15px 0; background: #1159c8; }
  .tab svg { display: block; width: 13px; height: 24px; margin: 15px 0 0 9px; fill: none; stroke: #fff; stroke-width: 2; }

  .notes { position: absolute; inset: 0; width: 3430px; height: 1721px; pointer-events: none; font-family: Lato, Carlito, sans-serif; font-weight: 400; stroke-width: .4px; }
  .num { stroke-width: 1.500px; }
</style>
